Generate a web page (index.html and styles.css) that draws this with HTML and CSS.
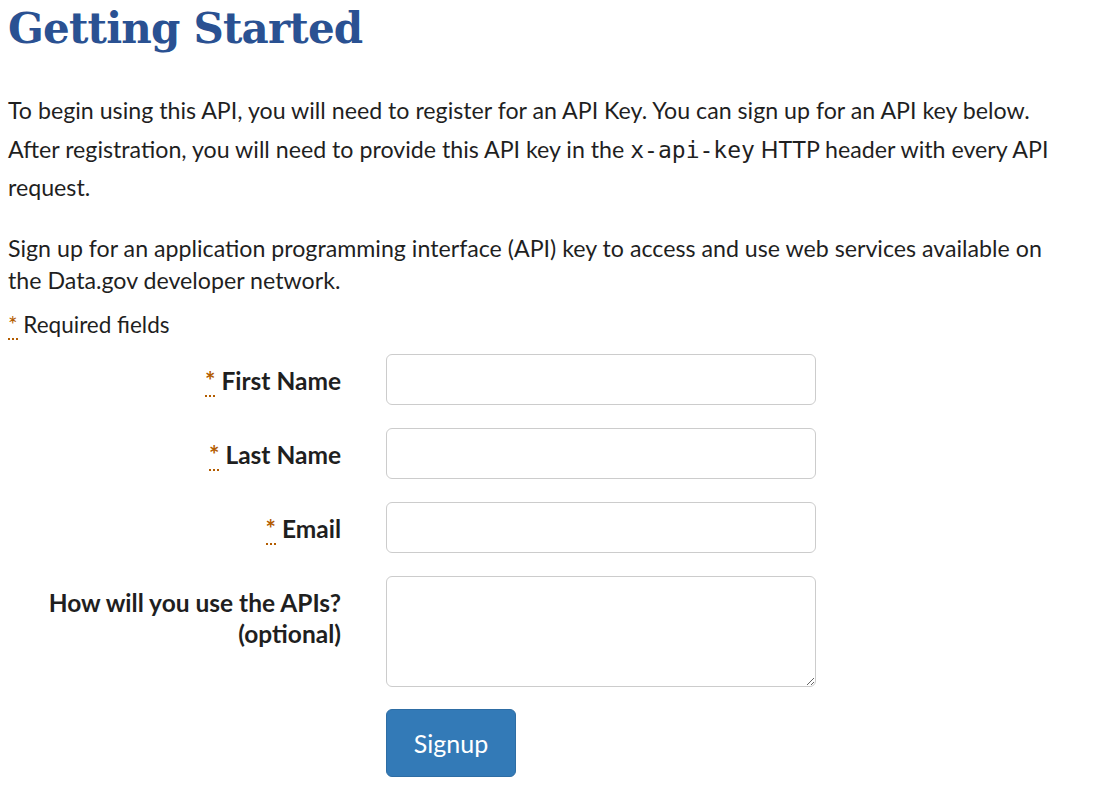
FILE: index.html
```html
<!DOCTYPE html>
<html lang="en">
<head>
<meta charset="utf-8">
<title>Getting Started</title>
<link rel="stylesheet" href="styles.css">
</head>
<body>
<main class="page">
  <h1 class="title">Getting Started</h1>
  <p class="text intro">To begin using this API, you will need to register for an API Key. You can sign up for an API key below. After registration, you will need to provide this API key in the <code class="code">x-api-key</code> HTTP header with every API request.</p>
  <p class="text">Sign up for an application programming interface (API) key to access and use web services available on the Data.gov developer network.</p>
  <p class="required-note"><abbr class="req" title="Required">*</abbr> Required fields</p>
  <form class="signup">
    <div class="row">
      <label class="label" for="fn"><abbr class="req" title="Required">*</abbr> First Name</label>
      <input class="field" id="fn" type="text">
    </div>
    <div class="row">
      <label class="label" for="ln"><abbr class="req" title="Required">*</abbr> Last Name</label>
      <input class="field" id="ln" type="text">
    </div>
    <div class="row">
      <label class="label" for="em"><abbr class="req" title="Required">*</abbr> Email</label>
      <input class="field" id="em" type="email">
    </div>
    <div class="row">
      <label class="label" for="use"><span class="line">How will you use the APIs?</span><span class="line">(optional)</span></label>
      <textarea class="field area" id="use"></textarea>
    </div>
    <div class="row row-btn">
      <span class="label"></span>
      <div><button class="btn" type="button">Signup</button></div>
    </div>
  </form>
</main>
</body>
</html>
```
FILE: styles.css
```css
html, body {
  margin: 0;
  padding: 0;
  background: #ffffff;
}
body {
  font-family: "Lato", "Open Sans", sans-serif;
  color: #1f1f1f;
}
.page {
  padding: 0 8px;
}
.title {
  margin: 0;
  font-family: "DejaVu Serif", serif;
  font-weight: bold;
  font-size: 42px;
  line-height: 58px;
  color: #2a5192;
  letter-spacing: -0.8px;
}
.text {
  margin: 0;
  max-width: 1050px;
  font-size: 23.2px;
  line-height: 32px;
}
.intro {
  margin-top: 36px;
}
.text + .text {
  margin-top: 29px;
}
.code {
  display: inline-block;
  font-family: "DejaVu Sans Mono", monospace;
  font-size: 23px;
  line-height: 32px;
  padding: 8px 0 5px;
}
.required-note {
  margin: 15px 0 0;
  font-size: 22.5px;
  line-height: 28px;
}
.req {
  color: #b35c00;
  text-decoration: none;
  border-bottom: 2px dotted #b35c00;
  cursor: help;
}
.signup {
  margin-top: 15px;
  display: flex;
  flex-direction: column;
  gap: 23px;
}
.row {
  display: grid;
  grid-template-columns: 333px 430px;
  column-gap: 45px;
}
.row-btn {
  margin-top: -1px;
}
.label {
  text-align: right;
  font-weight: bold;
  font-size: 24.5px;
  line-height: 31px;
  padding-top: 11px;
}
.line {
  display: block;
}
.field {
  box-sizing: border-box;
  width: 430px;
  height: 51px;
  border: 1px solid #cccccc;
  border-radius: 6px;
  background: #fff;
  margin: 0;
}
.area {
  height: 111px;
  resize: vertical;
}
.btn {
  box-sizing: border-box;
  width: 130px;
  height: 68px;
  border: 1px solid #2e6da4;
  border-radius: 6px;
  background: #337ab7;
  color: #ffffff;
  font-family: inherit;
  font-size: 25px;
  padding: 0;
}
```
